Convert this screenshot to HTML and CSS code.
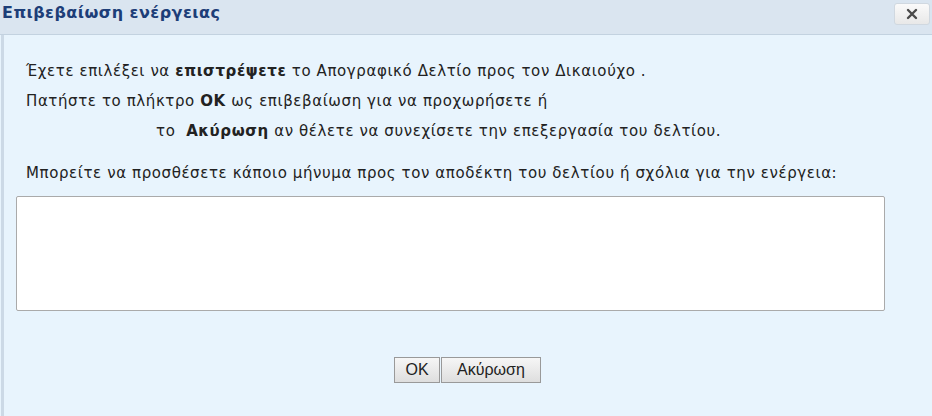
FILE: index.html
```html
<!DOCTYPE html>
<html lang="el">
<head>
    <meta charset="UTF-8">
    <title>Επιβεβαίωση ενέργειας</title>
    <link rel="stylesheet" href="styles.css">
</head>
<body>
    <div class="dialog">
        <div class="titlebar">
            <span class="title">Επιβεβαίωση ενέργειας</span>
            <button class="close" title="Κλείσιμο">
                <svg width="12" height="12" viewBox="0 0 12 12"><path d="M2 2 L10 10 M10 2 L2 10" stroke="#4a4a4a" stroke-width="2.4" stroke-linecap="round"/></svg>
            </button>
        </div>
        <div class="content">
            <div class="message">
                <p>Έχετε επιλέξει να <b>επιστρέψετε</b> το Απογραφικό Δελτίο προς τον Δικαιούχο .</p>
                <p>Πατήστε το πλήκτρο <b>OK</b> ως επιβεβαίωση για να προχωρήσετε ή</p>
                <p class="indent">το &nbsp;<b>Ακύρωση</b> αν θέλετε να συνεχίσετε την επεξεργασία του δελτίου.</p>
            </div>
            <p class="label">Μπορείτε να προσθέσετε κάποιο μήνυμα προς τον αποδέκτη του δελτίου ή σχόλια για την ενέργεια:</p>
            <textarea class="comment"></textarea>
            <div class="buttons">
                <button class="btn ok">OK</button><button class="btn cancel">Ακύρωση</button>
            </div>
        </div>
    </div>
</body>
</html>
```

FILE: styles.css
```css
/* dialog styles */
body, p, button, textarea {
    margin: 0;
    padding: 0;
    box-sizing: border-box;
}

body {
    font-family: 'DejaVu Sans', Verdana, sans-serif;
    background-color: #e8f4fd;
    color: #222;
    width: 932px;
    height: 416px;
    overflow: hidden;
}

.dialog {
    height: 416px;
    display: flex;
    flex-direction: column;
}

.titlebar {
    height: 34px;
    background-color: #dae5f0;
    border-bottom: 1px solid #c3d2e0;
    display: flex;
    justify-content: space-between;
    align-items: flex-start;
    padding-left: 2px;
}

.title {
    font-family: 'DejaVu Sans', Verdana, sans-serif;
    font-weight: bold;
    font-size: 16px;
    letter-spacing: 0.45px;
    color: #1d3e78;
    margin-top: 3px;
}

.close {
    width: 36px;
    height: 22px;
    margin-top: 3px;
    margin-right: 2px;
    border: 1px solid #d0d8e0;
    border-radius: 3px;
    background: linear-gradient(#fafafa, #e8e8e8);
    display: flex;
    align-items: center;
    justify-content: center;
}

.content {
    flex: 1;
    border-left: 3px solid #ccd9e6;
    margin-left: 1px;
    padding: 0 0 0 12px;
}

.message, .label {
    font-size: 15px;
    letter-spacing: 0.6px;
}

.message {
    padding: 21px 0 0 10px;
}

.message p {
    line-height: 30px;
}

.indent {
    padding-left: 130px;
}

.label {
    padding: 18px 0 0 10px;
}

.comment {
    display: block;
    margin-top: 14px;
    width: 869px;
    height: 115px;
    background: #fff;
    border: 1px solid #aaa;
    border-radius: 2px;
    resize: none;
}

.buttons {
    display: flex;
    justify-content: center;
    margin-top: 46px;
    padding-right: 14px;
}

.btn {
    font-family: 'Liberation Sans', Arial, sans-serif;
    font-size: 16px;
    height: 26px;
    border: 1px solid #999;
    background: linear-gradient(#f6f6f6, #dedede);
    color: #222;
    margin-left: 1px;
}

.ok {
    width: 46px;
}

.cancel {
    width: 100px;
}
```
